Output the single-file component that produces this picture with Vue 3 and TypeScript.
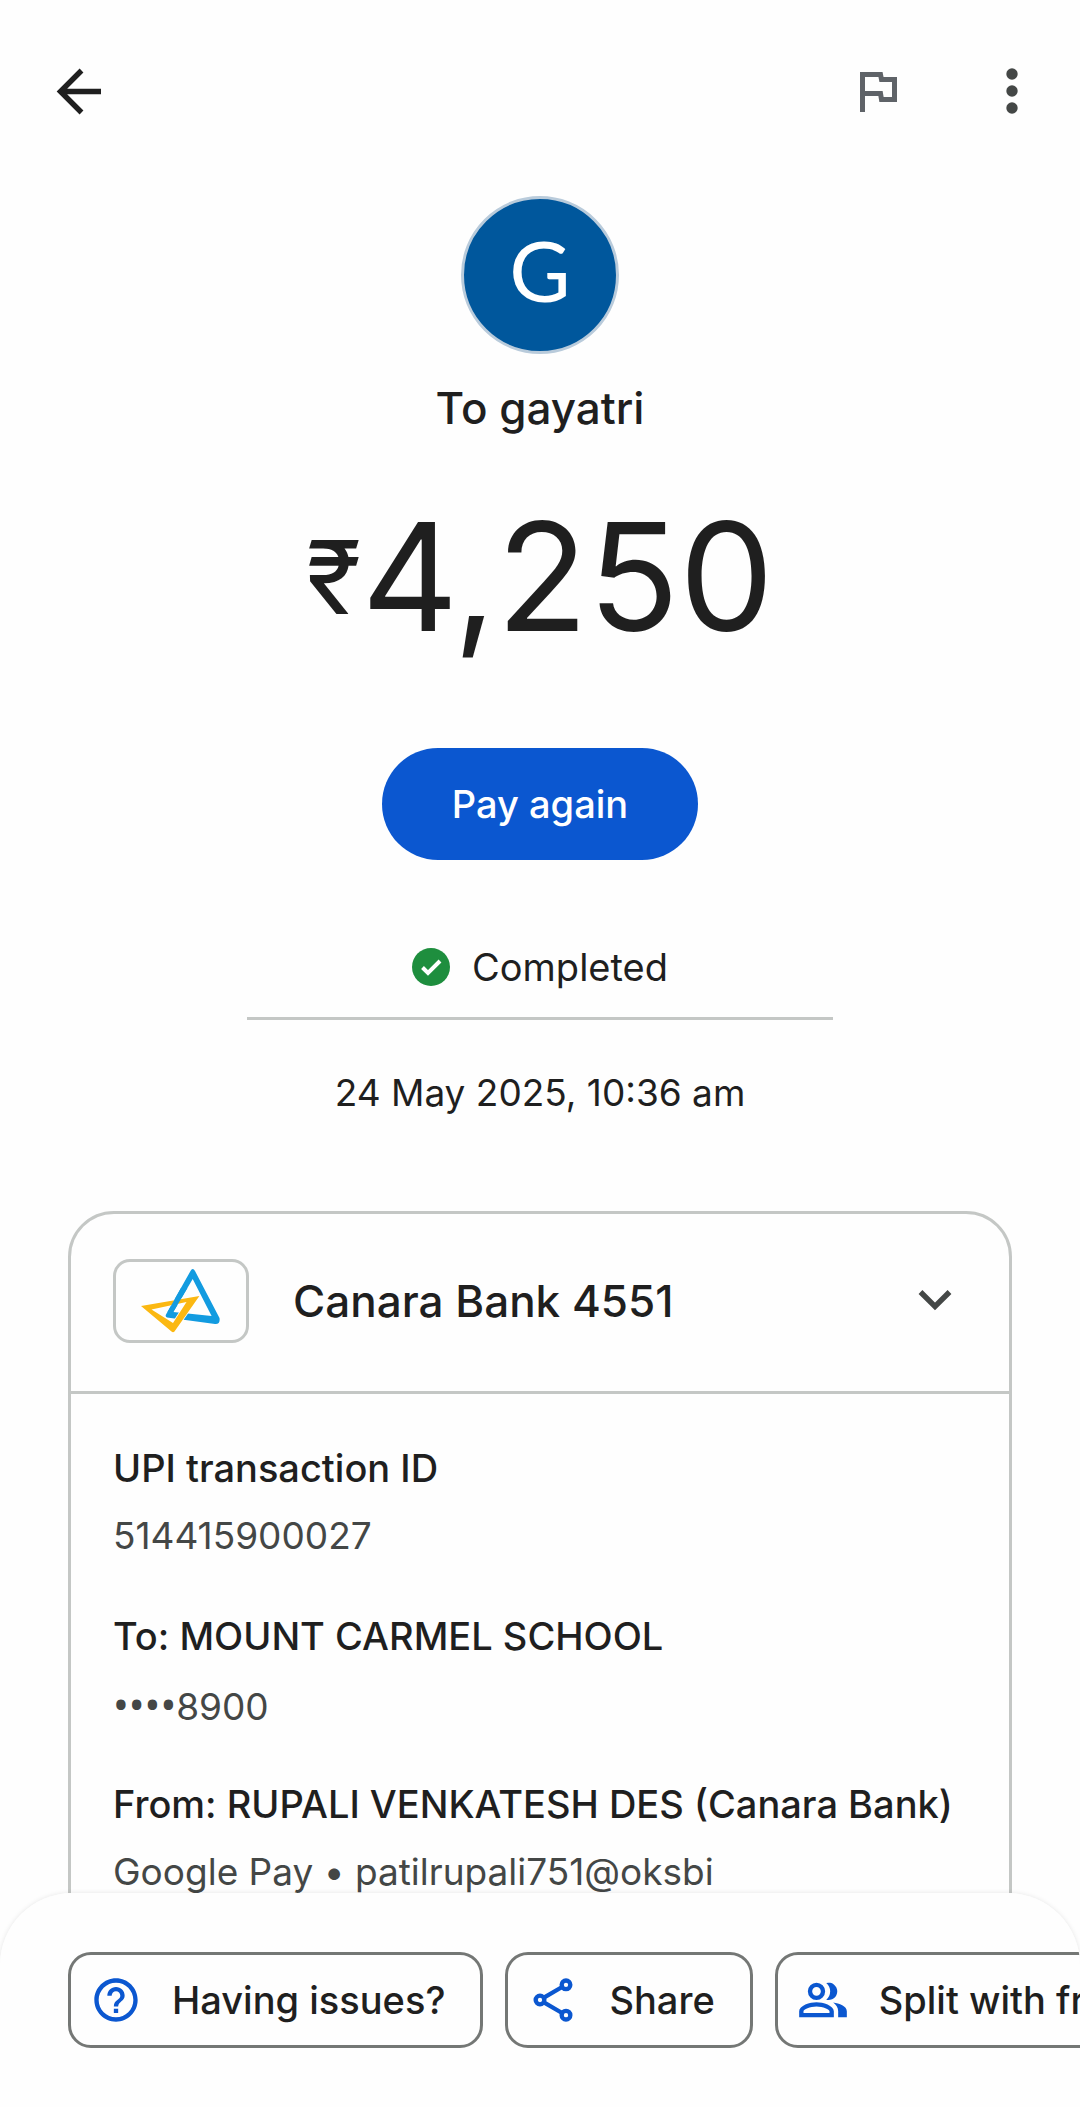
<script setup lang="ts">
interface Detail {
  label: string
  mask?: string
  value: string
}

interface Action {
  id: 'help' | 'share' | 'split'
  label: string
}

const details: Detail[] = [
  { label: 'UPI transaction ID', value: '514415900027' },
  { label: 'To: MOUNT CARMEL SCHOOL', mask: '••••', value: '8900' },
  { label: 'From: RUPALI VENKATESH DES (Canara Bank)', value: 'Google Pay • patilrupali751@oksbi' },
]

const actions: Action[] = [
  { id: 'help', label: 'Having issues?' },
  { id: 'share', label: 'Share' },
  { id: 'split', label: 'Split with friends' },
]
</script>

<template>
  <div class="screen">
    <header class="topbar">
      <button class="icon-button" type="button" aria-label="Back">
        <svg viewBox="0 0 48 48" width="48" height="48" aria-hidden="true">
          <path d="M46 24.500H6M26.500 3.500 5.500 24.500 26.500 45.500" fill="none" stroke="#1f1f1f" stroke-width="5.400" />
        </svg>
      </button>
      <div class="topbar-end">
        <button class="icon-button" type="button" aria-label="Report">
          <svg viewBox="0 0 48 48" width="48" height="48" aria-hidden="true">
            <path d="M7.500 45V7.500H25.500L26.500 12.500H39.500V32.500H26.500L25.500 26.500H7.500" fill="none" stroke="#5f6368" stroke-width="5" />
          </svg>
        </button>
        <button class="icon-button" type="button" aria-label="More options">
          <svg viewBox="0 0 48 48" width="48" height="48" fill="#444746" aria-hidden="true">
            <circle cx="24" cy="7" r="5.700" />
            <circle cx="24" cy="24" r="5.700" />
            <circle cx="24" cy="41" r="5.700" />
          </svg>
        </button>
      </div>
    </header>

    <main class="content">
      <div class="avatar">G</div>
      <h1 class="payee">To gayatri</h1>
      <p class="amount"><span class="currency">₹</span><span>4,250</span></p>
      <button class="pay" type="button">Pay again</button>
      <p class="status">
        <svg viewBox="0 0 38 38" width="38" height="38" aria-hidden="true">
          <circle cx="19" cy="19" r="19" fill="#1e8e3e" />
          <path d="M10.500 19.500 16 25 28 13" fill="none" stroke="#fff" stroke-width="4" />
        </svg>
        Completed
      </p>
      <hr class="rule" />
      <p class="date">24 May 2025, 10:36 am</p>

      <section class="card">
        <button class="account" type="button" aria-expanded="true">
          <span class="bank-logo">
            <svg viewBox="0 0 82 66" width="82" height="66" aria-hidden="true">
              <path fill="#129be0" fill-rule="evenodd" d="M52.700 1Q54 1 55 3L79.500 50Q80.500 56.500 75 56L27 49.500Q25 48.500 26 46.500L50.500 3Q51.500 1 52.700 1ZM52.700 11 33.300 44 71.600 48Z" />
              <path fill="#fbb812" stroke="#fff" stroke-width="1.500" paint-order="stroke" fill-rule="evenodd" d="M1 38 59.400 28 34.500 63.500Q33 65 31.500 63.500ZM11.500 41.500 33 55 46.500 34Z" />
              <path fill="#129be0" d="M41 20H47.400L33.300 44 27.500 44Z" />
            </svg>
          </span>
          <span class="account-name">Canara Bank 4551</span>
          <svg class="chevron" viewBox="0 0 48 48" width="48" height="48" aria-hidden="true">
            <path d="M9.500 15 24 29.500 38.500 15" fill="none" stroke="#444746" stroke-width="5.400" />
          </svg>
        </button>
        <dl class="details">
          <div v-for="item in details" :key="item.label" class="detail">
            <dt>{{ item.label }}</dt>
            <dd><span v-if="item.mask" class="mask">{{ item.mask }}</span>{{ item.value }}</dd>
          </div>
        </dl>
      </section>
    </main>

    <footer class="sheet">
      <button v-for="action in actions" :key="action.id" class="chip" type="button">
        <svg v-if="action.id === 'help'" viewBox="0 0 24 24" width="52" height="52" fill="#0b57d0" aria-hidden="true">
          <path d="M11 18h2v-2h-2v2zm1-16C6.480 2 2 6.480 2 12s4.480 10 10 10 10-4.480 10-10S17.520 2 12 2zm0 18c-4.410 0-8-3.590-8-8s3.590-8 8-8 8 3.590 8 8-3.590 8-8 8zm0-14c-2.210 0-4 1.790-4 4h2c0-1.100.9-2 2-2s2 .9 2 2c0 2-3 1.750-3 5h2c0-2.250 3-2.500 3-5 0-2.210-1.790-4-4-4z" />
        </svg>
        <svg v-else-if="action.id === 'share'" viewBox="0 0 24 24" width="52" height="52" fill="none" stroke="#0b57d0" stroke-width="2" aria-hidden="true">
          <path d="M7.800 10.900 16.200 6M7.800 13.100 16.200 18" />
          <circle cx="6" cy="12" r="2" />
          <circle cx="18" cy="5" r="2" />
          <circle cx="18" cy="19" r="2" />
        </svg>
        <svg v-else viewBox="0 0 24 24" width="52" height="52" fill="#0b57d0" aria-hidden="true">
          <path fill-rule="evenodd" d="M9 12a4 4 0 1 0 0-8 4 4 0 0 0 0 8zm0-2a2 2 0 1 1 0-4 2 2 0 0 1 0 4zM1 17.200C1 14.500 6 13 9 13s8 1.500 8 4.200V20H1zM3 18h12v-.8C15 16.400 12 15 9 15s-6 1.400-6 2.200z" />
          <path d="M13.500 4.150A5 5 0 0 1 13.500 11.850 4 4 0 1 0 13.500 4.150zM16.700 13.130C19.500 13.500 23 14.800 23 17.200V20H19v-2.800c0-1.800-1-3.150-2.300-4.070z" />
        </svg>
        {{ action.label }}
      </button>
    </footer>
  </div>
</template>

<style>
body {
  margin: 0;
  background: #fefefe;
}
</style>

<style scoped>
.screen {
  display: flex;
  flex-direction: column;
  height: 100vh;
  overflow: hidden;
  background: #fefefe;
  color: #1f1f1f;
  font-family: Inter, Roboto, 'Liberation Sans', sans-serif;
  font-size: 38px;
  line-height: 48px;
}

button {
  margin: 0;
  padding: 0;
  border: 0;
  background: none;
  color: inherit;
  font: inherit;
  cursor: pointer;
}

svg {
  display: block;
  flex: none;
}

h1,
p,
dl,
dd {
  margin: 0;
}

.topbar {
  display: flex;
  flex: none;
  align-items: center;
  justify-content: space-between;
  height: 182px;
  padding: 0 44px 0 55px;
}

.topbar-end {
  display: flex;
  gap: 85px;
}

.content {
  display: flex;
  flex: 1;
  flex-direction: column;
  align-items: center;
  min-height: 0;
  padding: 14px 68px 0;
  overflow-y: auto;
  scrollbar-width: none;
}

.content > * {
  flex: none;
}

.avatar {
  box-sizing: border-box;
  width: 158px;
  height: 158px;
  border: 3px solid #b9cbdb;
  border-radius: 50%;
  background: #00579c;
  color: #fff;
  font-family: Lato, Inter, sans-serif;
  font-size: 84px;
  line-height: 142px;
  text-align: center;
}

.payee {
  margin-top: 26px;
  font-size: 44px;
  font-weight: 500;
  line-height: 56px;
}

.amount {
  display: flex;
  align-items: center;
  margin-top: 61px;
  font-size: 150px;
  line-height: 160px;
}

.currency {
  font-size: 102px;
}

.pay {
  margin-top: 91px;
  padding: 32px 70px;
  border-radius: 56px;
  background: #0b57d0;
  color: #fff;
  font-weight: 500;
}

.status {
  display: flex;
  align-items: center;
  gap: 22px;
  margin-top: 83px;
}

.rule {
  width: 62%;
  height: 3px;
  margin: 26px 0 0;
  border: 0;
  background: #c4c7c5;
}

.date {
  margin-top: 49px;
  font-size: 37px;
}

.card {
  box-sizing: border-box;
  width: 100%;
  margin-top: 94px;
  border: 3px solid #c4c7c5;
  border-radius: 46px;
}

.account {
  display: flex;
  align-items: center;
  width: 100%;
  padding: 45px 50px 48px 42px;
  border-bottom: 3px solid #c4c7c5;
  text-align: left;
}

.bank-logo {
  display: flex;
  align-items: center;
  justify-content: center;
  box-sizing: border-box;
  width: 136px;
  height: 84px;
  border: 3px solid #c4c7c5;
  border-radius: 17px;
}

.account-name {
  flex: 1;
  margin-left: 44px;
  font-size: 44px;
  font-weight: 500;
}

.details {
  display: flex;
  flex-direction: column;
  gap: 52px;
  padding: 50px 42px;
}

.detail {
  display: flex;
  flex-direction: column;
  gap: 20px;
  white-space: nowrap;
}

dt {
  font-weight: 500;
}

dd {
  height: 48px;
  color: #444746;
  font-size: 37px;
}

.mask {
  font-family: 'Noto Sans', 'Open Sans', sans-serif;
  font-size: 42px;
}

.sheet {
  z-index: 1;
  display: flex;
  flex: none;
  gap: 22px;
  padding: 59px 68px;
  overflow-x: auto;
  border-radius: 72px 72px 0 0;
  background: #fefefe;
  box-shadow: 0 0 5px rgba(0, 0, 0, 0.1);
  scrollbar-width: none;
}

.chip {
  display: flex;
  flex: none;
  align-items: center;
  gap: 30px;
  box-sizing: border-box;
  height: 96px;
  padding: 0 35px 0 19px;
  border: 3px solid #747775;
  border-radius: 23px;
  font-weight: 500;
  white-space: nowrap;
}
</style>
